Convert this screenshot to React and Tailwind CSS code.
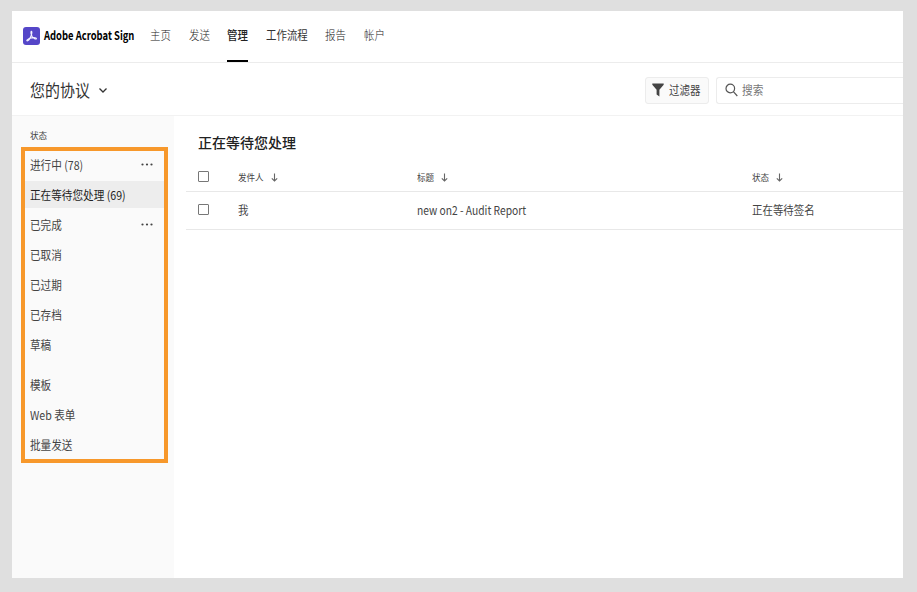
import { clsx } from 'clsx';

const NAV = [
  { label: '主页', width: 'w-[39px]' },
  { label: '发送', width: 'w-[38px]' },
  { label: '管理', width: 'w-[39px]', active: true },
  { label: '工作流程', width: 'w-[59px]', dark: true },
  { label: '报告', width: 'w-[39px]' },
  { label: '帐户', width: 'w-[39px]' },
];

const STATUS = [
  { label: '进行中 (78)', more: true },
  { label: '正在等待您处理 (69)', selected: true },
  { label: '已完成', more: true },
  { label: '已取消' },
  { label: '已过期' },
  { label: '已存档' },
  { label: '草稿' },
];

const OTHER = [{ label: '模板' }, { label: 'Web 表单' }, { label: '批量发送' }];

// Condensed text, the whole interface uses narrow glyphs
function Text({ className, scale = 'scale-x-[.87]', children }) {
  return (
    <span className={clsx('inline-block origin-left whitespace-nowrap', scale, className)}>
      {children}
    </span>
  );
}

function Logo() {
  return (
    <svg width="17" height="18" viewBox="0 0 17 18" className="shrink-0">
      <rect width="17" height="18" rx="3" fill="#5546c8" />
      <path
        d="M8.300 4.300C9.200 4.100 9 6.600 8 9C6.900 11.600 5.100 14.200 4 13.800C3.100 13.200 5.600 11.500 8.600 10.900C11.500 10.300 13.700 10.800 13.400 11.700C12.900 12.600 10.600 11.400 9.200 9.500C8 7.600 7.500 4.800 8.300 4.300Z"
        fill="none"
        stroke="#f3f1ff"
        strokeWidth="1.100"
        strokeLinejoin="round"
      />
    </svg>
  );
}

function SortArrow() {
  return (
    <svg width="7" height="9" viewBox="0 0 7 9" fill="none" stroke="#666" strokeWidth="1.100">
      <path d="M3.500 0.500V8M0.800 5.300L3.500 8L6.200 5.300" />
    </svg>
  );
}

function Checkbox() {
  return <span className="block h-[11px] w-[11px] rounded-[1px] border border-[#777] bg-white" />;
}

function SideItem({ item }) {
  return (
    <li
      className={clsx(
        'flex h-[27px] items-center justify-between pl-[5px] pr-[11px]',
        item.selected ? 'bg-[#ededed] text-[#222]' : 'text-[#444]'
      )}
    >
      <Text scale="scale-x-[.885]">{item.label}</Text>
      {item.more && (
        <svg width="12" height="3" viewBox="0 0 12 3" fill="#444">
          <circle cx="1.500" cy="1.500" r="1.100" />
          <circle cx="6" cy="1.500" r="1.100" />
          <circle cx="10.500" cy="1.500" r="1.100" />
        </svg>
      )}
    </li>
  );
}

function Column({ label, className }) {
  return (
    <div className={clsx('flex items-center gap-[6px] pt-[2px]', className)}>
      <Text scale="scale-x-[.95]" className="pt-px text-[9px] text-[#444]">{label}</Text>
      <SortArrow />
    </div>
  );
}

export default function App() {
  return (
    <div className="h-[592px] w-[917px] overflow-hidden bg-[#dfdfdf] pl-3 pr-[14px] pt-[11px] font-['Noto_Sans_CJK_SC',sans-serif] text-[12px] leading-[18px]">
      <div className="flex h-[567px] flex-col overflow-hidden bg-white">
        <header className="flex h-[52px] shrink-0 border-b border-[#ececec] pl-[11px]">
          <div className="flex h-[49px] w-[126.5px] items-center gap-1">
            <Logo />
            <Text scale="scale-x-[.785]" className="pb-[2px] font-bold text-black">Adobe Acrobat Sign</Text>
          </div>
          <nav className="flex">
            {NAV.map((n) => (
              <div key={n.label} className={clsx('h-[52px]', n.width)}>
                <div className="flex h-[49px] items-center pb-[2px]">
                  <Text
                    className={clsx(
                      n.active && 'font-medium text-[#222]',
                      n.dark && 'text-[#333]',
                      !n.active && !n.dark && 'font-light text-[#222]'
                    )}
                  >
                    {n.label}
                  </Text>
                </div>
                {n.active && <div className="h-[2px] w-[21px] bg-black" />}
              </div>
            ))}
          </nav>
        </header>

        <div className="flex h-[53px] shrink-0 items-center justify-between border-b border-[#f2f2f2] pl-[18px]">
          <div className="flex items-center pt-[2px]">
            <div className="w-[69px]">
              <Text scale="scale-x-[.88]" className="text-[17px] leading-6 text-[#333]">您的协议</Text>
            </div>
            <svg width="8" height="5" viewBox="0 0 8 5" fill="none" stroke="#333" strokeWidth="1.300">
              <path d="M0.500 0.500L4 4L7.500 0.500" />
            </svg>
          </div>
          <div className="flex gap-[7px] pt-[2px]">
            <button className="flex h-[27px] w-[64px] items-center gap-[5px] rounded-[3px] border border-[#ececec] bg-[#fafafa] pl-[6px] text-[#444]">
              <svg width="12" height="14" viewBox="0 0 12 14" fill="#444" className="shrink-0">
                <path d="M0.300 0.500H11.700V1.700L7.400 6.800V13.500L4.600 11.500V6.800L0.300 1.700Z" />
              </svg>
              <Text>过滤器</Text>
            </button>
            <div className="flex h-[27px] w-[187px] items-center gap-1 rounded-l-[3px] border border-r-0 border-[#ececec] pl-2 text-[#777]">
              <svg width="13" height="14" viewBox="0 0 13 14" fill="none" stroke="#555" strokeWidth="1.200">
                <circle cx="5.300" cy="5.500" r="4.300" />
                <path d="M8.400 8.700L12.300 13" />
              </svg>
              <Text scale="scale-x-[.89]" className="pb-px">搜索</Text>
            </div>
          </div>
        </div>

        <div className="flex flex-1">
          <aside className="w-[162px] shrink-0 bg-[#fafafa] pl-[9px]">
            <div className="flex h-[31px] items-center pl-[9px] pt-[8px] text-[9px] text-[#444]">
              <Text scale="scale-x-[.95]">状态</Text>
            </div>
            <div className="h-[316px] w-[147px] border-4 border-[#f7982b]">
              <ul className="flex flex-col gap-[3px]">
                {STATUS.map((s) => <SideItem key={s.label} item={s} />)}
              </ul>
              <ul className="mt-[13px] flex flex-col gap-[3px]">
                {OTHER.map((s) => <SideItem key={s.label} item={s} />)}
              </ul>
            </div>
          </aside>

          <main className="flex-1 pl-3">
            <h1 className="flex h-[46px] items-end pl-3 text-[14px] leading-[40px] text-[#222]">
              <Text scale="scale-x-100" className="font-medium">正在等待您处理</Text>
            </h1>
            <div className="flex h-[30px] items-center border-b border-[#e8e8e8] pb-px pl-3">
              <div className="w-[40px]"><Checkbox /></div>
              <Column label="发件人" className="w-[179px]" />
              <Column label="标题" className="w-[335px]" />
              <Column label="状态" />
            </div>
            <div className="flex h-[38px] items-center border-b border-[#e8e8e8] pb-[2px] pl-3 text-[#444]">
              <div className="w-[40px]"><Checkbox /></div>
              <div className="w-[179px]"><Text>我</Text></div>
              <div className="w-[335px]"><Text scale="scale-x-[.855]">new on2 - Audit Report</Text></div>
              <div><Text>正在等待签名</Text></div>
            </div>
          </main>
        </div>
      </div>
    </div>
  );
}
